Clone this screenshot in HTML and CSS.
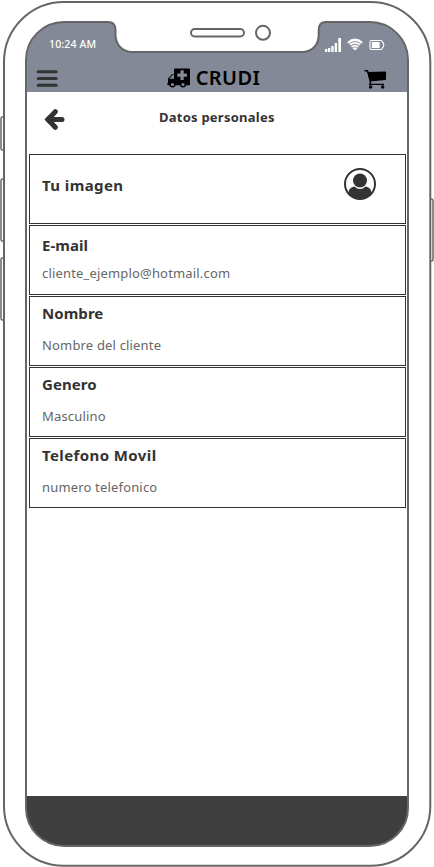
FILE: index.html
```
<!DOCTYPE html>
<html lang="es">
<head>
<meta charset="utf-8">
<title>CRUDI</title>
<link rel="stylesheet" href="styles.css">
</head>
<body>
<div class="phone">
  <main class="screen">
    <header class="top">
      <div class="status">
        <span class="time">10:24 AM</span>
        <svg class="signals" width="62" height="16" viewBox="324 37 62 16">
          <g fill="#fff"><path d="M325 49h2.300v3H325zM328 48h2.300v4H328zM331.300 46h2.300v6h-2.300zM334.700 43h2.300v9h-2.300zM338.300 38h2.700v14h-2.700z"/><path d="M352.500 48.200Q355 46.300 357.500 48.200L355 50.600z"/><rect x="371.800" y="42" width="7.800" height="6" rx=".5"/></g>
          <g fill="none" stroke="#fff"><path stroke-width="2.200" d="M348 42.800Q355 36.700 362 42.800"/><path stroke-width="1.700" d="M349.900 44.900Q355 40.700 360.100 44.900M351.500 46.900Q355 44.200 358.500 46.900"/><path stroke-width="1.100" d="M371.500 40.500h9.300q1.500 0 1.500 1.500c2 1 2 5 0 6q0 1.500-1.500 1.500h-9.300q-1.500 0-1.500-1.500v-6q0-1.500 1.500-1.500z"/></g>
        </svg>
      </div>
      <nav class="bar">
        <svg class="menu" width="22" height="18" viewBox="36 70 22 18"><path d="M38.200 71.700h18M38.200 78.500h18M38.200 85.300h18" stroke="#333" stroke-width="3.100" stroke-linecap="round"/></svg>
        <div class="brand">
          <svg width="24" height="20" viewBox="166 68 24 20"><path fill-rule="evenodd" d="M174 68.500h14.200q.8 0 .8.800v15.200q0 .7-.7.700h-16.600H167q-.7 0-.7-.7v-1l.7-.7v-4.300l4-4.300H173V69.500q0-1 1-1zM173 75.100h-1.400l-3 3.100v.6h4.400zM179.500 70.300v3.200h-3.200v3.300h3.200V80h3.200v-3.200h3.200v-3.300h-3.200v-3.200z"/><circle cx="171.500" cy="84.500" r="2.300" fill="#838996" stroke="#000" stroke-width="1.500"/><circle cx="182" cy="84.500" r="2.300" fill="#838996" stroke="#000" stroke-width="1.500"/></svg>
          <span>CRUDI</span>
        </div>
        <svg class="cart" width="24" height="20" viewBox="363 69 24 20"><path d="M367.500 71.900L385.300 71.600q.7 0 .7.700V79.200q0 .7-.7.800L370 81.500z"/><path d="M364.500 70.700h3l3 11.500-.8 2.200H384" fill="none" stroke="#000" stroke-width="1.400"/><circle cx="370.600" cy="87" r="1.700"/><circle cx="382.700" cy="87" r="1.700"/></svg>
      </nav>
    </header>
    <div class="heading">
      <svg width="21" height="22" viewBox="44 109 21 22"><path d="M55.300 111.700L48 119.500l7.300 7.800M49 119.500H62" fill="none" stroke="#333" stroke-width="5" stroke-linecap="round" stroke-linejoin="round"/><path d="M44.500 119.500l5-5v10z" fill="#333"/></svg>
      <h1>Datos personales</h1>
    </div>
    <section class="fields">
      <article class="field picture">
        <h2 class="wide">Tu imagen</h2>
        <svg width="32" height="32" viewBox="0 0 32 32"><defs><clipPath id="disc"><circle cx="16" cy="16" r="15"/></clipPath></defs><circle cx="16" cy="16" r="15" fill="#fff" stroke="#333" stroke-width="2"/><g fill="#333" clip-path="url(#disc)"><path d="M4.500 32V25c.3-4 2.500-6 6-6.500Q16 23.500 21.500 18.500c3.500.5 5.700 2.500 6 6.500v7z"/><ellipse cx="16" cy="12.500" rx="7" ry="7.100"/></g></svg>
      </article>
      <article class="field email"><h2>E-mail</h2><p>cliente_ejemplo@hotmail.com</p></article>
      <article class="field"><h2>Nombre</h2><p>Nombre del cliente</p></article>
      <article class="field"><h2>Genero</h2><p>Masculino</p></article>
      <article class="field"><h2 class="wide">Telefono Movil</h2><p>numero telefonico</p></article>
    </section>
    <footer class="bottom"></footer>
  </main>
  <svg class="frame" width="434" height="867" viewBox="0 0 434 867" fill="none" stroke="#666" stroke-width="2">
    <path d="M108 22Q115.500 22 115.500 30V35C115.500 45 123 52 132 52H302C312 52 318.700 45 318.700 35V30Q318.700 22 326 22V20H108z" fill="#fff" stroke="none"/>
    <rect x="4" y="2" width="426.300" height="863.800" rx="60"/>
    <path d="M64 22H108Q115.500 22 115.500 30V35C115.500 45 123 52 132 52H302C312 52 318.700 45 318.700 35V30Q318.700 22 326 22H370A38 38 0 0 1 408 60V808A38 38 0 0 1 370 846H64A38 38 0 0 1 26 808V60A38 38 0 0 1 64 22z"/>
    <rect x="191" y="29" width="53" height="7.500" rx="3.700"/><circle cx="263" cy="32.800" r="7"/>
    <path stroke-width="1.500" d="M4 117H2Q1 117 1 119V148Q1 150 2 150H4M4 179H2Q1 179 1 181V239Q1 241 2 241H4M4 258H2Q1 258 1 260V318Q1 320 2 320H4M430 199H432Q433 199 433 201V259Q433 261 432 261H430"/>
  </svg>
</div>
</body>
</html>
```
FILE: styles.css
```
* { box-sizing: border-box; }
body { margin: 0; background: #fff; font-family: "Noto Sans", "Open Sans", sans-serif; color: #333; }
h1, h2, p { margin: 0; white-space: nowrap; }
svg { display: block; flex: none; }
.phone { position: relative; width: 434px; height: 867px; padding: 22px 26px 21px; overflow: hidden; }
.frame { position: absolute; left: 0; top: 0; pointer-events: none; }
.screen { display: flex; flex-direction: column; width: 382px; height: 824px; border-radius: 38px; overflow: hidden; background: #fff; }
.top { height: 70px; background: #838996; flex: none; }
.status { display: flex; justify-content: space-between; height: 46px; padding: 15px 22px 0 23px; }
.time { color: #fff; font-size: 10.5px; line-height: 15px; font-weight: 500; letter-spacing: .15px; }
.bar { display: flex; justify-content: space-between; height: 24px; padding: 0 21px 0 10px; }
.menu { margin-top: 2px; }
.brand { display: flex; gap: 5px; color: #000; font-size: 20px; line-height: 19px; font-weight: 600; letter-spacing: .4px; margin-left: 6px; }
.cart { margin-top: 1px; }
.heading { display: flex; height: 62px; padding: 17px 18px 0; }
.heading h1 { margin-left: 94px; margin-top: -1px; font-size: 13px; line-height: 18px; font-weight: 700; letter-spacing: .24px; }
.fields { display: flex; flex-direction: column; gap: 1px; padding-left: 3px; }
.field { width: 377px; height: 70px; border: 1px solid #333; padding: 5px 12px; }
.field h2 { font-size: 15px; line-height: 22px; font-weight: 700; letter-spacing: .05px; }
.field .wide { letter-spacing: .4px; }
.field p { margin-top: 11px; font-size: 13px; line-height: 20px; color: #666; letter-spacing: .17px; }
.picture { display: flex; justify-content: space-between; padding: 13px 29px 0 12px; }
.picture h2 { margin-top: 6px; }
.email { padding-top: 8px; }
.email p { margin-top: 7px; }
.bottom { margin-top: auto; height: 50px; background: #3f3f3f; }
```
